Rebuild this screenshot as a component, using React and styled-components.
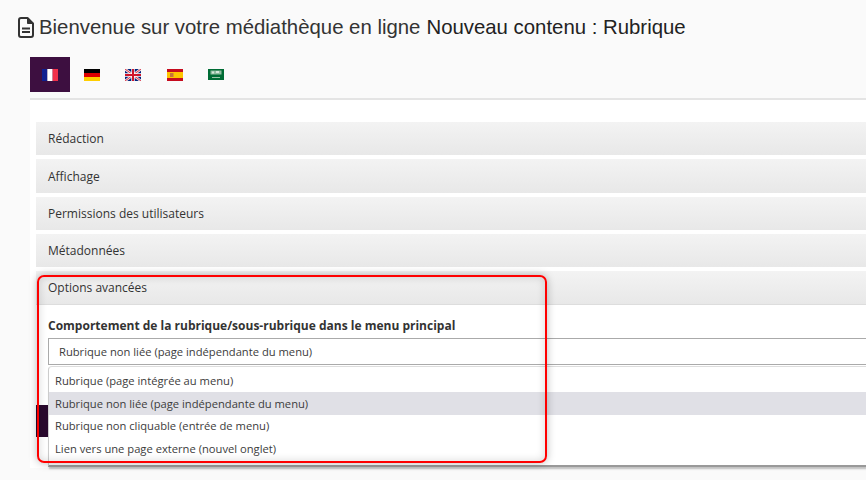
import React from "react";
import styled, { createGlobalStyle } from "styled-components";

const GlobalStyle = createGlobalStyle`
  html, body {
    margin: 0;
    padding: 0;
    height: 480px;
    overflow: hidden;
    background: #fafafa;
  }
`;

const Page = styled.div`
  width: 866px;
  height: 480px;
  position: relative;
  overflow: hidden;
  background: #fafafa;
`;

const Title = styled.h1`
  display: flex;
  align-items: center;
  gap: 5px;
  margin: 0;
  height: 54px;
  padding-left: 18px;
  font-family: "Liberation Sans", Arial, sans-serif;
  font-size: 20.38px;
  font-weight: 400;
  color: #333333;
  white-space: nowrap;
`;

const TitleStrong = styled.span`
  color: #222222;
  margin-left: 1px;
`;

const Main = styled.div`
  margin-left: 30px;
  margin-top: 3px;
`;

const Tabs = styled.div`
  display: flex;
  align-items: flex-start;
  height: 41px;
  border-bottom: 2px solid #e4e4e4;
`;

const Tab = styled.div`
  width: ${(p) => p.$w}px;
  height: 35px;
  display: flex;
  align-items: center;
  justify-content: center;
  flex-shrink: 0;
  background: ${(p) => (p.$active ? "#3d0f40" : "transparent")};
`;

const Sheet = styled.div`
  background: #ffffff;
  padding: 22px 0 0 6px;
  height: 346px;
`;

const Header = styled.div`
  height: ${(p) => p.$h}px;
  margin-bottom: ${(p) => p.$gap ?? 4}px;
  display: flex;
  align-items: center;
  padding-left: 12px;
  box-sizing: border-box;
  background: linear-gradient(#f3f3f3, #e8e8e8);
  font-family: "Open Sans", sans-serif;
  font-size: 12px;
  color: #333333;
  border-bottom: ${(p) => (p.$open ? "1px solid #dddddd" : "0")};
`;

const Body = styled.div`
  padding: 11px 0 0 12px;
  position: relative;
`;

const FieldLabel = styled.div`
  font-family: "Open Sans", sans-serif;
  font-size: 12px;
  font-weight: 700;
  color: #333333;
  height: 22px;
  line-height: 19px;
`;

const SelectBox = styled.div`
  height: 25px;
  border: 1px solid #aaaaaa;
  border-right: 0;
  padding-left: 10px;
  display: flex;
  align-items: center;
  font-family: "Open Sans", sans-serif;
  font-size: 11.2px;
  color: #3c3c3c;
`;

const Options = styled.div`
  margin-top: 1px;
  position: relative;
  z-index: 2;
  background: #ffffff;
  border-left: 1px solid #cccccc;
  border-top: 1px solid #dddddd;
  border-bottom: 2px solid #999999;
  border-top-left-radius: 4px;
  padding: 2.5px 0 5px;
  box-shadow: 1px 2px 2px rgba(0, 0, 0, 0.25);
`;

const Option = styled.div`
  height: 22.6px;
  display: flex;
  align-items: center;
  padding-left: 6px;
  font-family: "Open Sans", sans-serif;
  font-size: 11.2px;
  color: #3c3c3c;
  background: ${(p) => (p.$selected ? "#e0e0e6" : "transparent")};
`;

const DarkButton = styled.div`
  position: absolute;
  left: 0;
  top: 100px;
  width: 40px;
  height: 32px;
  background: #2a0a2e;
`;

const Callout = styled.div`
  position: absolute;
  left: 37px;
  top: 275px;
  width: 506px;
  height: 184px;
  border: 2px solid #ff0000;
  border-radius: 7px;
  z-index: 5;
  box-shadow: 0 0 8px rgba(0, 0, 0, 0.28), inset 0 0 8px rgba(0, 0, 0, 0.16);
`;

const FileIcon = () => (
  <svg width="16" height="21" viewBox="0 0 16 21" fill="none" stroke="#333" strokeWidth="2" strokeLinejoin="round">
    <path d="M3 1h6.5L15 6.5V18a2 2 0 0 1-2 2H3a2 2 0 0 1-2-2V3a2 2 0 0 1 2-2z" />
    <path d="M9.5 1v5.5H15" fill="#333" strokeWidth="1" />
    <path d="M4 11.5h8M4 15h8" />
  </svg>
);

const FlagFR = () => (
  <svg width="16" height="12" viewBox="0 0 3 2" preserveAspectRatio="none">
    <rect width="1" height="2" fill="#0f1f8f" />
    <rect x="1" width="1" height="2" fill="#ffffff" />
    <rect x="2" width="1" height="2" fill="#f0304a" />
  </svg>
);

const FlagDE = () => (
  <svg width="16" height="12" viewBox="0 0 3 3" preserveAspectRatio="none">
    <rect width="3" height="1" fill="#000000" />
    <rect y="1" width="3" height="1" fill="#dd0000" />
    <rect y="2" width="3" height="1" fill="#ffce00" />
  </svg>
);

const FlagGB = () => (
  <svg width="16" height="12" viewBox="0 0 16 12">
    <rect width="16" height="12" fill="#00247d" />
    <path d="M0 0L16 12M16 0L0 12" stroke="#f4d8dc" strokeWidth="2.6" />
    <path d="M0 0L16 12M16 0L0 12" stroke="#cf142b" strokeWidth="0.8" />
    <path d="M8 0V12M0 6H16" stroke="#ffffff" strokeWidth="3.4" />
    <path d="M8 0V12M0 6H16" stroke="#cf142b" strokeWidth="2" />
  </svg>
);

const FlagES = () => (
  <svg width="16" height="12" viewBox="0 0 16 12">
    <rect width="16" height="12" fill="#c60b1e" />
    <rect y="3" width="16" height="6" fill="#ffc400" />
    <rect x="3" y="4" width="3.5" height="4" fill="#c8743a" />
  </svg>
);

const FlagSA = () => (
  <svg width="16" height="11" viewBox="0 0 16 11">
    <rect width="16" height="11" fill="#006c35" />
    <rect x="2.5" y="1.5" width="11" height="4" fill="#8fbc9f" />
    <rect x="4" y="2.5" width="2" height="2" fill="#d4e6da" />
    <rect x="8" y="2" width="3" height="2" fill="#d4e6da" />
    <rect x="4" y="8" width="8" height="1" fill="#9cc4a8" />
  </svg>
);

const sections = [
  { label: "Rédaction", h: 33 },
  { label: "Affichage", h: 34 },
  { label: "Permissions des utilisateurs", h: 33 },
  { label: "Métadonnées", h: 33 },
];

const options = [
  "Rubrique (page intégrée au menu)",
  "Rubrique non liée (page indépendante du menu)",
  "Rubrique non cliquable (entrée de menu)",
  "Lien vers une page externe (nouvel onglet)",
];

const App = () => {
  return (
    <Page>
      <GlobalStyle />
      <Title>
        <FileIcon />
        Bienvenue sur votre médiathèque en ligne
        <TitleStrong>Nouveau contenu : Rubrique</TitleStrong>
      </Title>
      <Main>
        <Tabs>
          <Tab $w={40} $active><FlagFR /></Tab>
          <Tab $w={44}><FlagDE /></Tab>
          <Tab $w={38}><FlagGB /></Tab>
          <Tab $w={46}><FlagES /></Tab>
          <Tab $w={36}><FlagSA /></Tab>
        </Tabs>
        <Sheet>
          {sections.map((s) => (
            <Header key={s.label} $h={s.h}>{s.label}</Header>
          ))}
          <Header $open $h={34} $gap={0}>Options avancées</Header>
          <Body>
            <DarkButton />
            <FieldLabel>Comportement de la rubrique/sous-rubrique dans le menu principal</FieldLabel>
            <SelectBox>Rubrique non liée (page indépendante du menu)</SelectBox>
            <Options>
              {options.map((o, i) => (
                <Option key={o} $selected={i === 1}>{o}</Option>
              ))}
            </Options>
          </Body>
        </Sheet>
      </Main>
      <Callout />
    </Page>
  );
};

export default App;
